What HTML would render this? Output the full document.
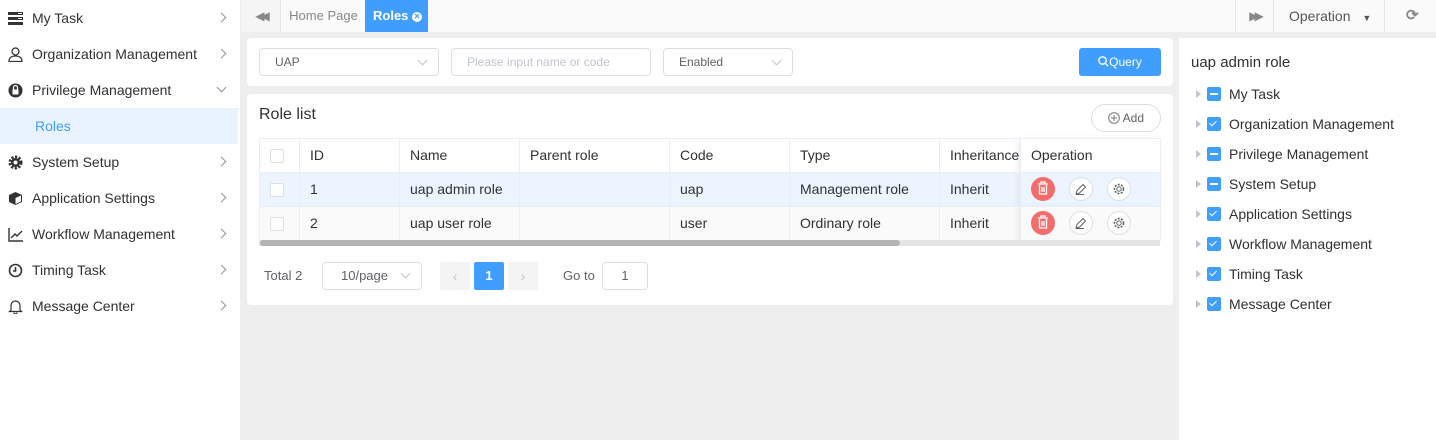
<!DOCTYPE html>
<html><head><meta charset="utf-8">
<style>
*{box-sizing:border-box;margin:0;padding:0}
body{width:1436px;height:440px;overflow:hidden;background:#eee;font-family:"Liberation Sans",sans-serif;font-size:14px;color:#303133;position:relative}
.abs{position:absolute}
.side{left:0;top:0;width:240px;height:440px;background:#fff}
.mi{position:absolute;left:0;width:238px;height:36px;line-height:36px;padding-left:32px;color:#303133;font-size:14px}
.mi .ic{position:absolute;left:8px;top:11px;width:15px;height:15px}
.mi .ar{position:absolute;right:13px;top:14px;width:7px;height:7px;border-right:1.3px solid #909399;border-top:1.3px solid #909399;transform:rotate(45deg)}
.mi .dn{position:absolute;right:13px;top:12px;width:7px;height:7px;border-right:1.3px solid #909399;border-bottom:1.3px solid #909399;transform:rotate(45deg)}
.top{left:241px;top:0;width:1195px;height:32px;background:#fafafa}
.card{background:#fff;border-radius:4px}
.inp{position:absolute;height:28px;border:1px solid #dcdfe6;border-radius:4px;background:#fff;font-size:12px;line-height:26px;padding-left:15px;color:#606266}
.chev{position:absolute;right:12px;top:8px;width:7px;height:7px;border-right:1px solid #c0c4cc;border-bottom:1px solid #c0c4cc;transform:rotate(45deg)}
table{border-collapse:collapse;position:absolute;left:259px;top:138px;width:901px;table-layout:fixed}
td{height:34px;border-right:1px solid #ebeef5;border-bottom:1px solid #ebeef5;padding-left:10px;font-size:14px;color:#303133;padding-bottom:2px}
tr.h td{border-top:1px solid #ebeef5}
td:first-child{border-left:1px solid #ebeef5}
.cb{display:inline-block;width:14px;height:14px;border:1px solid #dcdfe6;border-radius:2px;background:#fff;vertical-align:middle}
.ob{position:absolute;width:24px;height:24px;border-radius:50%;border:1px solid #dcdfe6;background:#fff}
.del{background:#f56c6c;border-color:#f56c6c}
.tr{position:absolute;left:1196px;height:30px;line-height:30px;font-size:14px;color:#303133}
.tr .t{position:absolute;left:0;top:11px;width:0;height:0;border-left:5px solid #c0c4cc;border-top:4px solid transparent;border-bottom:4px solid transparent}
.tr .b{position:absolute;left:11px;top:8px;width:14px;height:14px;background:#409eff;border-radius:2px}
.tr span{position:absolute;left:33px;white-space:nowrap}
</style></head><body>
<div class="abs side">
 <div class="mi" style="top:0"><svg class="ic" viewBox="0 0 15 15"><rect x="0" y="1" width="15" height="3" fill="#333"/><rect x="0" y="6" width="15" height="3" fill="#333"/><rect x="0" y="11" width="15" height="3" fill="#333"/><rect x="10" y="2" width="4" height="1" fill="#fff"/><rect x="10" y="7" width="4" height="1" fill="#fff"/></svg>My Task<i class="ar"></i></div>
 <div class="mi" style="top:36px"><svg class="ic" viewBox="0 0 15 15" fill="none" stroke="#333" stroke-width="1.3"><circle cx="7.5" cy="4.5" r="3.5"/><path d="M1 14.5c0-4 3-5.5 6.5-5.5s6.5 1.5 6.5 5.5z"/></svg>Organization Management<i class="ar"></i></div>
 <div class="mi" style="top:72px"><svg class="ic" viewBox="0 0 15 15"><circle cx="7.5" cy="7.5" r="7" fill="#333"/><rect x="4.5" y="6.5" width="6" height="5" fill="#fff"/><path d="M5.5 6.5v-2a2 2 0 0 1 4 0v2" fill="none" stroke="#fff" stroke-width="1.2"/></svg>Privilege Management<i class="dn"></i></div>
 <div class="mi" style="top:108px;background:#e8f3ff;color:#409eff;padding-left:35px">Roles</div>
 <div class="mi" style="top:144px"><svg class="ic" viewBox="0 0 15 15"><circle cx="7.5" cy="7.5" r="5.5" fill="none" stroke="#333" stroke-width="3" stroke-dasharray="2.2 1.4"/><circle cx="7.5" cy="7.5" r="4.5" fill="#333"/><circle cx="7.5" cy="7.5" r="2" fill="#fff"/></svg>System Setup<i class="ar"></i></div>
 <div class="mi" style="top:180px"><svg class="ic" viewBox="0 0 15 15"><path d="M7.5 1L14 4v7l-6.5 3L1 11V4z" fill="#333"/><path d="M7.5 7L13 4.5v6l-5.5 2.5z" fill="#fff"/></svg>Application Settings<i class="ar"></i></div>
 <div class="mi" style="top:216px"><svg class="ic" viewBox="0 0 15 15" fill="none" stroke="#333" stroke-width="1.4"><path d="M1 1v13h14"/><path d="M3 11l4-4 2 2 5-5"/></svg>Workflow Management<i class="ar"></i></div>
 <div class="mi" style="top:252px"><svg class="ic" viewBox="0 0 15 15" fill="none" stroke="#333" stroke-width="1.6"><circle cx="7.5" cy="7.5" r="6"/><path d="M7.5 4v4H5"/></svg>Timing Task<i class="ar"></i></div>
 <div class="mi" style="top:288px"><svg class="ic" viewBox="0 0 15 15" fill="none" stroke="#333" stroke-width="1.2"><path d="M3 11V6.5a4.5 4.5 0 0 1 9 0V11l1.5 1.5h-12z"/><path d="M6 13.5a1.5 1.5 0 0 0 3 0"/></svg>Message Center<i class="ar"></i></div>
</div>
<div class="abs top">
 <div class="abs" style="left:0;top:0;width:40px;height:32px;background:#f5f5f5;border-right:1px solid #e6e6e6;color:#888;font-size:12px;line-height:32px;text-align:center;letter-spacing:-4px">◀◀</div>
 <div class="abs" style="left:41px;top:0;width:83px;height:32px;line-height:32px;text-align:center;color:#888;font-size:13px">Home Page</div>
 <div class="abs" style="left:124px;top:0;width:63px;height:32px;line-height:32px;background:#409eff;color:#fff;font-weight:bold;font-size:13px;padding-left:8px">Roles <span style="display:inline-block;width:10px;height:10px;border-radius:50%;background:#fff;color:#409eff;font-size:8px;line-height:10px;text-align:center;vertical-align:1px">✕</span></div>
 <div class="abs" style="left:994px;top:0;width:38px;height:32px;border-left:1px solid #e6e6e6;color:#888;font-size:12px;line-height:32px;text-align:center;letter-spacing:-4px">▶▶</div>
 <div class="abs" style="left:1032px;top:0;width:112px;height:32px;border-left:1px solid #e6e6e6;border-right:1px solid #e6e6e6;color:#555;line-height:32px;padding-left:15px">Operation <span style="font-size:9px;margin-left:8px">▼</span></div>
 <div class="abs" style="left:1165px;top:0;width:20px;height:32px;line-height:32px;color:#888;font-size:15px;font-weight:bold">⟳</div>
</div>
<div class="abs card" style="left:247px;top:38px;width:926px;height:48px">
 <div class="inp" style="left:12px;top:10px;width:180px">UAP<div class="chev"></div></div>
 <div class="inp" style="left:204px;top:10px;width:200px;color:#c0c4cc">Please input name or code</div>
 <div class="inp" style="left:416px;top:10px;width:130px">Enabled<div class="chev"></div></div>
 <div class="abs" style="left:832px;top:10px;width:82px;height:28px;background:#409eff;border-radius:3px;color:#fff;font-size:12px;line-height:28px;text-align:center"><svg width="11" height="11" viewBox="0 0 11 11" style="vertical-align:-1px" fill="none" stroke="#fff" stroke-width="1.3"><circle cx="4.5" cy="4.5" r="3.7"/><path d="M7.2 7.2l3 3"/></svg>Query</div>
</div>
<div class="abs card" style="left:247px;top:94px;width:926px;height:211px">
 <div class="abs" style="left:12px;top:12px;font-size:16px;color:#303133">Role list</div>
 <div class="abs" style="left:844px;top:10px;width:70px;height:28px;border:1px solid #dcdfe6;border-radius:14px;font-size:12px;line-height:26px;text-align:center;color:#606266"><svg width="12" height="12" viewBox="0 0 12 12" style="vertical-align:-2px" fill="none" stroke="#777" stroke-width="1"><circle cx="6" cy="6" r="5.3"/><path d="M6 3v6M3 6h6"/></svg> Add</div>
 <div class="abs" style="left:17px;top:182px;font-size:13px;color:#606266;line-height:0">Total 2</div>
 <div class="inp" style="left:75px;top:168px;width:100px;font-size:13px;padding-left:18px">10/page<div class="chev" style="top:7px"></div></div>
 <div class="abs" style="left:193px;top:168px;width:30px;height:28px;background:#f4f4f5;border-radius:2px;color:#c0c4cc;text-align:center;line-height:28px">‹</div>
 <div class="abs" style="left:227px;top:168px;width:30px;height:28px;background:#409eff;border-radius:2px;color:#fff;font-weight:bold;text-align:center;line-height:28px;font-size:13px">1</div>
 <div class="abs" style="left:261px;top:168px;width:30px;height:28px;background:#f4f4f5;border-radius:2px;color:#c0c4cc;text-align:center;line-height:28px">›</div>
 <div class="abs" style="left:316px;top:174px;font-size:13px;color:#606266">Go to</div>
 <div class="inp" style="left:355px;top:168px;width:46px;text-align:center;padding:0;font-size:13px">1</div>
</div>
<table>
 <colgroup><col style="width:40px"><col style="width:100px"><col style="width:120px"><col style="width:150px"><col style="width:120px"><col style="width:150px"><col style="width:81px"><col style="width:140px"></colgroup>
 <tr class="h"><td><span class="cb"></span></td><td>ID</td><td>Name</td><td>Parent role</td><td>Code</td><td>Type</td><td>Inheritance</td><td style="box-shadow:-3px 0 6px rgba(0,0,0,.08)">Operation</td></tr>
 <tr style="background:#ecf5ff"><td><span class="cb"></span></td><td>1</td><td>uap admin role</td><td></td><td>uap</td><td>Management role</td><td>Inherit</td><td style="box-shadow:-3px 0 6px rgba(0,0,0,.08)"></td></tr>
 <tr style="background:#fafafa"><td><span class="cb"></span></td><td>2</td><td>uap user role</td><td></td><td>user</td><td>Ordinary role</td><td>Inherit</td><td style="box-shadow:-3px 0 6px rgba(0,0,0,.08)"></td></tr>
</table>
<div class="abs" style="left:259px;top:240px;width:901px;height:6px;background:#e4e4e4"></div>
<div class="abs" style="left:260px;top:240px;width:640px;height:6px;background:#b3b3b3;border-radius:3px"></div>
<div class="ob del" style="left:1031px;top:177px"></div><div class="ob" style="left:1069px;top:177px"></div><div class="ob" style="left:1107px;top:177px"></div>
<div class="ob del" style="left:1031px;top:211px"></div><div class="ob" style="left:1069px;top:211px"></div><div class="ob" style="left:1107px;top:211px"></div>
<svg class="abs" style="left:1031px;top:177px" width="100" height="60" viewBox="0 0 100 60">
 <g fill="none" stroke="#fff" stroke-width="1.3"><path d="M7 7h10M10 7V5h4v2M8.5 8v9h7V8M11 10v5M13 10v5"/><path d="M7 41h10M10 41v-2h4v2M8.5 42v9h7v-9M11 44v5M13 44v5"/></g>
 <g fill="none" stroke="#606266" stroke-width="1"><path d="M45 17l1-3.5 6-6 2.5 2.5-6 6z M45 17.5h8"/><path d="M45 51l1-3.5 6-6 2.5 2.5-6 6z M45 51.5h8"/>
 <circle cx="88" cy="12" r="2.2"/><circle cx="88" cy="12" r="4.5" stroke-width="1.6" stroke-dasharray="2 1.3"/><circle cx="88" cy="46" r="2.2"/><circle cx="88" cy="46" r="4.5" stroke-width="1.6" stroke-dasharray="2 1.3"/></g>
</svg>
<div class="abs" style="left:1179px;top:38px;width:257px;height:402px;background:#fff"></div>
<div class="abs" style="left:1191px;top:54px;font-size:15px;color:#303133">uap admin role</div>
<div class="tr" style="top:79px"><i class="t"></i><i class="b"><i style="position:absolute;left:3px;top:6px;width:8px;height:2px;background:#fff"></i></i><span>My Task</span></div>
<div class="tr" style="top:109px"><i class="t"></i><i class="b"><i style="position:absolute;left:4px;top:2px;width:4px;height:7px;border-right:1.5px solid #fff;border-bottom:1.5px solid #fff;transform:rotate(45deg)"></i></i><span>Organization Management</span></div>
<div class="tr" style="top:139px"><i class="t"></i><i class="b"><i style="position:absolute;left:3px;top:6px;width:8px;height:2px;background:#fff"></i></i><span>Privilege Management</span></div>
<div class="tr" style="top:169px"><i class="t"></i><i class="b"><i style="position:absolute;left:3px;top:6px;width:8px;height:2px;background:#fff"></i></i><span>System Setup</span></div>
<div class="tr" style="top:199px"><i class="t"></i><i class="b"><i style="position:absolute;left:4px;top:2px;width:4px;height:7px;border-right:1.5px solid #fff;border-bottom:1.5px solid #fff;transform:rotate(45deg)"></i></i><span>Application Settings</span></div>
<div class="tr" style="top:229px"><i class="t"></i><i class="b"><i style="position:absolute;left:4px;top:2px;width:4px;height:7px;border-right:1.5px solid #fff;border-bottom:1.5px solid #fff;transform:rotate(45deg)"></i></i><span>Workflow Management</span></div>
<div class="tr" style="top:259px"><i class="t"></i><i class="b"><i style="position:absolute;left:4px;top:2px;width:4px;height:7px;border-right:1.5px solid #fff;border-bottom:1.5px solid #fff;transform:rotate(45deg)"></i></i><span>Timing Task</span></div>
<div class="tr" style="top:289px"><i class="t"></i><i class="b"><i style="position:absolute;left:4px;top:2px;width:4px;height:7px;border-right:1.5px solid #fff;border-bottom:1.5px solid #fff;transform:rotate(45deg)"></i></i><span>Message Center</span></div>
</body></html>
